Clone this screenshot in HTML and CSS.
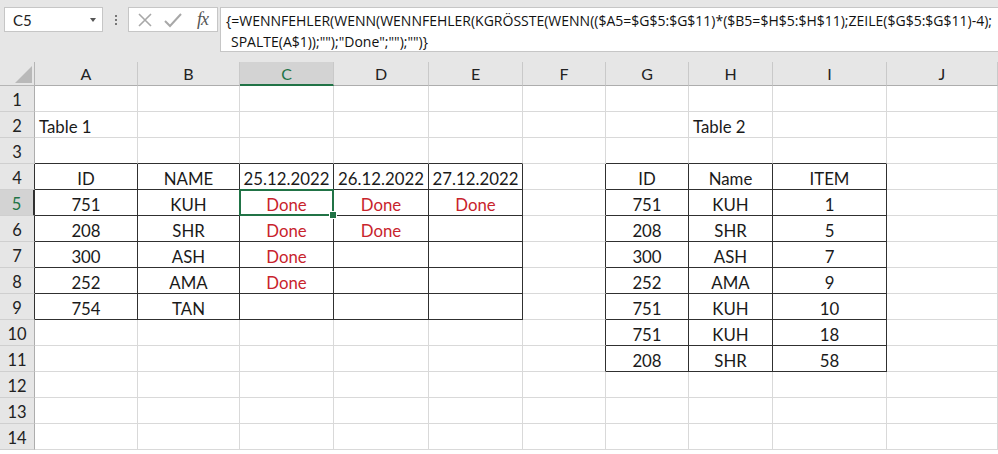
FILE: index.html
```html
<!DOCTYPE html>
<html>
<head>
<meta charset="utf-8">
<link rel="stylesheet" href="styles.css">
</head>
<body>
<div class="toolbar">
  <div class="namebox"><span>C5</span><span class="caret"></span></div>
  <div class="dots"><span></span><span></span><span></span></div>
  <div class="fbtns">
    <svg class="ico" width="20" height="20" viewBox="0 0 20 20"><path d="M4 4L16 16M16 4L4 16" stroke="#a8a8a8" stroke-width="1.6" fill="none"/></svg>
    <svg class="ico" width="22" height="20" viewBox="0 0 22 20"><path d="M3 11L8 16L19 4" stroke="#a8a8a8" stroke-width="2" fill="none"/></svg>
    <span class="fx">fx</span>
  </div>
  <div class="fbox">
    <div class="fline">{=WENNFEHLER(WENN(WENNFEHLER(KGRÖSSTE(WENN(($A5=$G$5:$G$11)*($B5=$H$5:$H$11);ZEILE($G$5:$G$11)-4);</div>
    <div class="fline l2">SPALTE(A$1));"");"Done";"");"")}</div>
  </div>
</div>
<div class="sheet">
  <div class="corner"><svg width="35" height="24" viewBox="0 0 35 24"><path d="M32 4L32 21L15 21Z" fill="#b9b9b9"/></svg></div>
  <div class="ch">A</div><div class="ch">B</div><div class="ch sel">C</div><div class="ch">D</div><div class="ch">E</div><div class="ch">F</div><div class="ch">G</div><div class="ch">H</div><div class="ch">I</div><div class="ch">J</div>

  <div class="rh">1</div>
  <div class="c"></div><div class="c"></div><div class="c"></div><div class="c"></div><div class="c"></div><div class="c"></div><div class="c"></div><div class="c"></div><div class="c"></div><div class="c"></div>

  <div class="rh">2</div>
  <div class="c lt">Table 1</div><div class="c"></div><div class="c"></div><div class="c"></div><div class="c"></div><div class="c"></div><div class="c"></div><div class="c lt">Table 2</div><div class="c"></div><div class="c"></div>

  <div class="rh">3</div>
  <div class="c b"></div><div class="c b"></div><div class="c b"></div><div class="c b"></div><div class="c b"></div><div class="c"></div><div class="c b"></div><div class="c b"></div><div class="c b"></div><div class="c"></div>

  <div class="rh r">4</div>
  <div class="c t">ID</div><div class="c t">NAME</div><div class="c t">25.12.2022</div><div class="c t">26.12.2022</div><div class="c t">27.12.2022</div><div class="c r"></div><div class="c t">ID</div><div class="c t">Name</div><div class="c t">ITEM</div><div class="c"></div>

  <div class="rh r sel">5</div>
  <div class="c t">751</div><div class="c t">KUH</div><div class="c t red active">Done</div><div class="c t red">Done</div><div class="c t red">Done</div><div class="c r"></div><div class="c t">751</div><div class="c t">KUH</div><div class="c t">1</div><div class="c"></div>

  <div class="rh r">6</div>
  <div class="c t">208</div><div class="c t">SHR</div><div class="c t red">Done</div><div class="c t red">Done</div><div class="c t"></div><div class="c r"></div><div class="c t">208</div><div class="c t">SHR</div><div class="c t">5</div><div class="c"></div>

  <div class="rh r">7</div>
  <div class="c t">300</div><div class="c t">ASH</div><div class="c t red">Done</div><div class="c t"></div><div class="c t"></div><div class="c r"></div><div class="c t">300</div><div class="c t">ASH</div><div class="c t">7</div><div class="c"></div>

  <div class="rh r">8</div>
  <div class="c t">252</div><div class="c t">AMA</div><div class="c t red">Done</div><div class="c t"></div><div class="c t"></div><div class="c r"></div><div class="c t">252</div><div class="c t">AMA</div><div class="c t">9</div><div class="c"></div>

  <div class="rh r">9</div>
  <div class="c t">754</div><div class="c t">TAN</div><div class="c t"></div><div class="c t"></div><div class="c t"></div><div class="c r"></div><div class="c t">751</div><div class="c t">KUH</div><div class="c t">10</div><div class="c"></div>

  <div class="rh">10</div>
  <div class="c"></div><div class="c"></div><div class="c"></div><div class="c"></div><div class="c"></div><div class="c r"></div><div class="c t">751</div><div class="c t">KUH</div><div class="c t">18</div><div class="c"></div>

  <div class="rh">11</div>
  <div class="c"></div><div class="c"></div><div class="c"></div><div class="c"></div><div class="c"></div><div class="c r"></div><div class="c t">208</div><div class="c t">SHR</div><div class="c t">58</div><div class="c"></div>

  <div class="rh">12</div>
  <div class="c"></div><div class="c"></div><div class="c"></div><div class="c"></div><div class="c"></div><div class="c"></div><div class="c"></div><div class="c"></div><div class="c"></div><div class="c"></div>

  <div class="rh">13</div>
  <div class="c"></div><div class="c"></div><div class="c"></div><div class="c"></div><div class="c"></div><div class="c"></div><div class="c"></div><div class="c"></div><div class="c"></div><div class="c"></div>

  <div class="rh">14</div>
  <div class="c"></div><div class="c"></div><div class="c"></div><div class="c"></div><div class="c"></div><div class="c"></div><div class="c"></div><div class="c"></div><div class="c"></div><div class="c"></div>
</div>
</body>
</html>
```
FILE: styles.css
```css
* { box-sizing: border-box; }
html, body { margin: 0; padding: 0; }
body {
  width: 998px;
  height: 454px;
  overflow: hidden;
  background: #ffffff;
  font-family: Lato, "Open Sans", sans-serif;
  color: #1a1a1a;
}
.toolbar {
  height: 62px;
  background: #e6e6e6;
  display: flex;
  align-items: flex-start;
  padding-top: 7px;
}
.namebox {
  margin-left: 4px;
  width: 99px;
  height: 25px;
  background: #fff;
  border: 1px solid #c6c6c6;
  display: flex;
  align-items: center;
  justify-content: space-between;
  padding: 0 6px 0 8px;
  font-size: 15px;
  color: #222;
}
.caret {
  width: 0; height: 0;
  border-left: 3px solid transparent;
  border-right: 3px solid transparent;
  border-top: 4px solid #555;
}
.dots {
  width: 25px;
  height: 25px;
  display: flex;
  flex-direction: column;
  align-items: center;
  justify-content: center;
  gap: 2px;
}
.dots span { width: 2px; height: 2px; background: #777; }
.fbtns {
  width: 90px;
  height: 25px;
  background: #fff;
  border: 1px solid #c6c6c6;
  display: flex;
  align-items: center;
  padding-left: 6px;
  gap: 7px;
}
.fx {
  font-family: "Liberation Serif", serif;
  font-style: italic;
  font-size: 18px;
  color: #555;
  margin-left: 6px;
  letter-spacing: -1px;
}
.fbox {
  margin-left: 2px;
  flex: 1;
  height: 45px;
  background: #fff;
  border: 1px solid #c6c6c6;
  border-right: none;
  padding: 2px 0 0 5px;
  font-family: "Open Sans", sans-serif;
  font-size: 14px;
  color: #111;
  white-space: nowrap;
  overflow: hidden;
}
.fline { height: 21px; line-height: 21px; }
.l2 { padding-left: 5px; }

.sheet {
  display: grid;
  grid-template-columns: 35px 103px 102px 94px 95px 94px 83px 83px 84px 114px 111px;
  grid-template-rows: 24px repeat(14, 26px);
}
.corner {
  background: #e6e6e6;
  border-right: 1px solid #b5b5b5;
  border-bottom: 1px solid #b5b5b5;
}
.corner svg { display: block; }
.ch {
  background: #e6e6e6;
  border-right: 1px solid #c9c9c9;
  border-bottom: 1px solid #adadad;
  display: flex;
  align-items: center;
  justify-content: center;
  font-size: 16px;
  color: #222;
}
.ch.sel {
  background: #d3d3d3;
  color: #217346;
  border-bottom: 2px solid #217346;
}
.rh {
  background: #e6e6e6;
  border-right: 1px solid #adadad;
  border-bottom: 1px solid #cfcfcf;
  display: flex;
  align-items: center;
  justify-content: center;
  font-size: 16.5px;
  color: #222;
  padding-top: 2px;
}
.rh.sel {
  background: #d3d3d3;
  color: #217346;
  border-right: 2px solid #217346;
}
.c {
  border-right: 1px solid #d9d9d9;
  border-bottom: 1px solid #d9d9d9;
  font-size: 16.8px;
  display: flex;
  align-items: center;
  padding-top: 3px;
  white-space: nowrap;
}
.c.lt { padding-left: 4px; }
.c.t { justify-content: center; border-right-color: #303030; border-bottom-color: #303030; }
.c.b { border-bottom-color: #303030; }
.c.r, .rh.r { border-right-color: #303030; }
.red { color: #c8232c; }
.active { position: relative; }
.active::after {
  content: "";
  position: absolute;
  left: -1px; top: -1px; right: -1px; bottom: -1px;
  border: 2px solid #217346;
}
.active::before {
  content: "";
  position: absolute;
  right: -4px; bottom: -4px;
  width: 6px; height: 6px;
  background: #217346;
  border: 1px solid #fff;
  z-index: 2;
}
```
